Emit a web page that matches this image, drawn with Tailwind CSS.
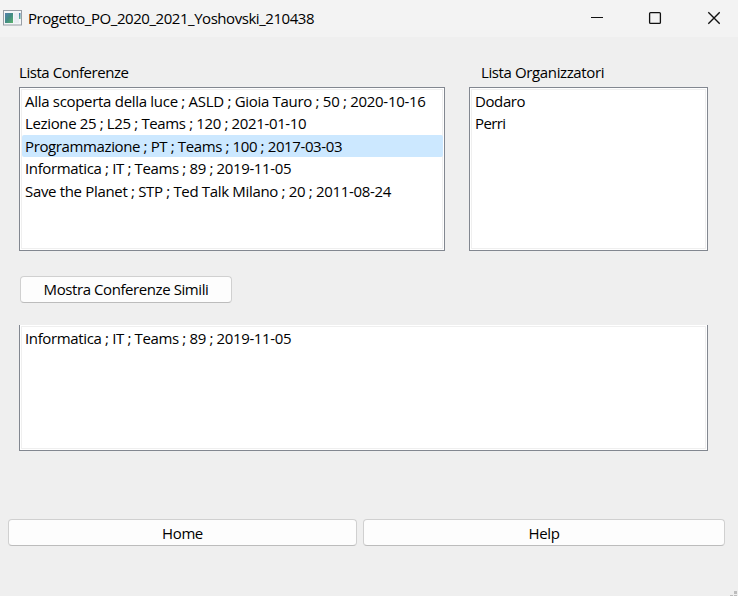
<!DOCTYPE html>
<html lang="it"><head><meta charset="utf-8"><title>Progetto_PO_2020_2021_Yoshovski_210438</title>
<script src="https://cdn.jsdelivr.net/npm/@tailwindcss/browser@4"></script></head>
<body class="w-[738px] h-[596px] overflow-hidden bg-[#efefef] text-black text-[15px] leading-[22px] whitespace-nowrap font-['Open_Sans','Noto_Sans',sans-serif]">
<div class="relative flex flex-col w-[738px] h-[596px]">
  <header class="flex items-start h-[37px] bg-[#f3f3f3] pl-[3px]">
    <svg class="w-[19px] h-[16px] mt-[10px] shrink-0" viewBox="0 0 19 16"><defs><linearGradient id="g" x1="0" y1="0" x2="1" y2="1"><stop offset="0" stop-color="#5581ae"/><stop offset=".5" stop-color="#428b83"/><stop offset="1" stop-color="#5bb56b"/></linearGradient><linearGradient id="b" x1="0" y1="0" x2="0" y2="1"><stop offset="0" stop-color="#4a78b0"/><stop offset="1" stop-color="#5bb58b"/></linearGradient></defs><rect x=".5" y=".5" width="18" height="14.5" fill="#f4f6f8" stroke="#979ea5"/><rect x="2" y="3" width="8" height="10" fill="url(#g)"/><rect x="11" y="3" width="5" height="10" fill="#e9edf2"/><rect x="16" y="3" width="1.5" height="6" fill="url(#b)"/></svg>
    <h1 class="ml-[6px] mt-[7px] w-[560px] tracking-[-0.45px]">Progetto_PO_2020_2021_Yoshovski_210438</h1>
    <svg class="w-[130px] h-[14px] ml-[2px] mt-[11px] shrink-0" viewBox="590 11 130 14" fill="none" stroke="#111" stroke-width="1.3"><path d="M591 17.5h12" stroke-width="1"/><rect x="649.6" y="12.6" width="10.8" height="10.8" rx="1"/><path d="M708.3 12.3l11.4 11.4m0-11.4l-11.4 11.4"/></svg>
  </header>
  <main class="flex flex-col">
    <div class="flex mt-[24px] pl-[19px] h-[26px]"><h2 class="w-[462px] tracking-[-0.45px]">Lista Conferenze</h2><h2 class="tracking-[-0.38px]">Lista Organizzatori</h2></div>
    <div class="flex gap-[24px] pl-[19px]">
      <div class="w-[426px] h-[164px] border border-[#828790] bg-white p-px"><ul class="h-full border border-[#efefef]">
        <li class="h-[22px] pl-[3px] tracking-[-0.3px]">Alla scoperta della luce ; ASLD ; Gioia Tauro ; 50 ; 2020-10-16</li>
        <li class="h-[23px] pl-[3px] tracking-[-0.36px]">Lezione 25 ; L25 ; Teams ; 120 ; 2021-01-10</li>
        <li class="h-[22px] pl-[3px] -mr-px bg-[#cce8ff] rounded-[2px] tracking-[-0.38px]">Programmazione ; PT ; Teams ; 100 ; 2017-03-03</li>
        <li class="h-[23px] pl-[3px] tracking-[-0.36px]">Informatica ; IT ; Teams ; 89 ; 2019-11-05</li>
        <li class="h-[22px] pl-[3px] tracking-[-0.33px]">Save the Planet ; STP ; Ted Talk Milano ; 20 ; 2011-08-24</li>
      </ul></div>
      <div class="w-[239px] h-[164px] border border-[#828790] bg-white p-px"><ul class="h-full border border-[#efefef]">
        <li class="h-[22px] pl-[3px] tracking-[-0.4px]">Dodaro</li><li class="h-[22px] pl-[3px] tracking-[-0.6px]">Perri</li>
      </ul></div>
    </div>
    <button class="mt-[25px] ml-[20px] w-[212px] h-[27px] pb-[2px] rounded-[4px] border border-[#d0d0d0] border-b-[#bcbcbc] bg-[#fdfdfd] tracking-[-0.42px]">Mostra Conferenze Simili</button>
    <div class="mt-[22px] ml-[19px] w-[689px] h-[126px] border border-t-0 border-[#828790] bg-white p-px"><ul class="h-full border border-[#efefef]"><li class="pl-[3px] tracking-[-0.36px]">Informatica ; IT ; Teams ; 89 ; 2019-11-05</li></ul></div>
    <div class="flex mt-[68px] ml-[8px] gap-[6px]">
      <button class="w-[349px] h-[27px] rounded-[4px] border border-[#d0d0d0] border-b-[#bcbcbc] bg-[#fdfdfd] tracking-[-0.4px]">Home</button>
      <button class="w-[362px] h-[27px] rounded-[4px] border border-[#d0d0d0] border-b-[#bcbcbc] bg-[#fdfdfd] tracking-[-0.35px]">Help</button>
    </div>
  </main>
  <svg class="absolute right-0 bottom-0 w-[8px] h-[5px]" viewBox="0 0 8 5" fill="#bdbdbd"><path d="M4 0h3v3H4zM0 4h3v1H0zM4 4h3v1H4z"/></svg>
</div>
</body></html>
